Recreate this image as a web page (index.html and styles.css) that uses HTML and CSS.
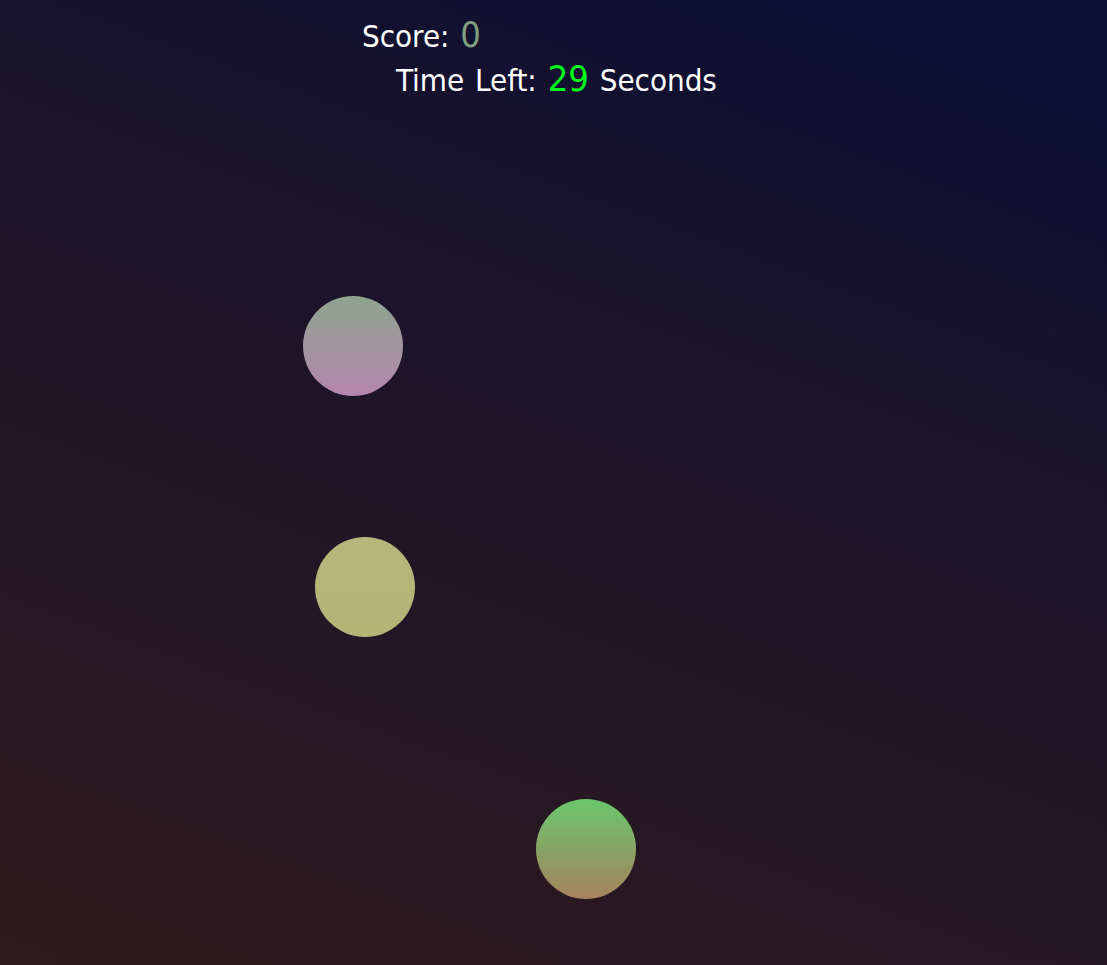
FILE: index.html
```html
<!DOCTYPE html>
<html lang="en">
<head>
<meta charset="utf-8">
<title>Bubble Game</title>
<link rel="stylesheet" href="styles.css">
</head>
<body>
<div class="game">
  <header class="hud">
    <div class="score">Score: <span class="score-value">0</span></div>
    <div class="timer">Time Left: <span class="time-value">29</span> Seconds</div>
  </header>
  <div class="bubble bubble-pink" style="left:303px; top:296px;"></div>
  <div class="bubble bubble-yellow" style="left:315px; top:537px;"></div>
  <div class="bubble bubble-green" style="left:536px; top:799px;"></div>
</div>
</body>
</html>
```
FILE: styles.css
```css
html, body {
  margin: 0;
  padding: 0;
  height: 100%;
}
body {
  background: linear-gradient(20deg, #301a1d 0%, #1f1528 50%, #0b0e35 100%);
  font-family: "DejaVu Sans Condensed", "DejaVu Sans", sans-serif;
  color: #ffffff;
  overflow: hidden;
}
.game {
  position: relative;
  width: 100%;
  height: 100%;
}
.hud {
  display: flex;
  flex-direction: column;
  padding-top: 14px;
}
.score {
  font-size: 31px;
  line-height: 42px;
  padding-left: 362px;
  word-spacing: 2px;
}
.score-value {
  font-size: 36px;
  color: #7f9f7f;
}
.timer {
  font-size: 31px;
  line-height: 43px;
  padding-left: 396px;
  word-spacing: 2px;
}
.time-value {
  font-size: 36px;
  color: #00ff1a;
}
.bubble {
  position: absolute;
  width: 100px;
  height: 100px;
  border-radius: 50%;
}
.bubble-pink {
  background: linear-gradient(to bottom, #8da48e, #b686ae);
}
.bubble-yellow {
  background: linear-gradient(to bottom, #b6b87b, #b3b577);
}
.bubble-green {
  background: linear-gradient(to bottom, #6ac66b, #a6825e);
}
```
